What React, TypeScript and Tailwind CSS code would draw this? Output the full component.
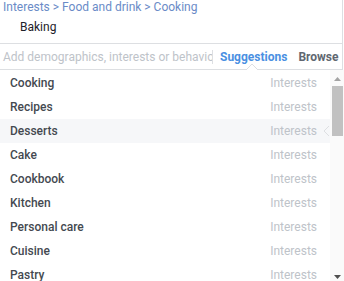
import React from "react";

const items = [
  "Cooking",
  "Recipes",
  "Desserts",
  "Cake",
  "Cookbook",
  "Kitchen",
  "Personal care",
  "Cuisine",
  "Pastry",
];

export default function App() {
  return (
    <div
      className="w-[344px] h-[281px] overflow-hidden bg-white"
      style={{ fontFamily: "Roboto, 'Liberation Sans', sans-serif" }}
    >
      <div className="border-r border-[#dddfe2] w-[343px]">
        <div className="h-[43px] pl-[3px]">
          <div className="h-[15px] text-[12px] leading-[15px] text-[#6a8bc7]">
            Interests &gt; Food and drink &gt; Cooking
          </div>
          <div className="pl-[17px] pt-[4px] text-[12px] leading-[16px] text-[#1d2129]">
            Baking
          </div>
        </div>
        <div className="relative h-[27px] border-t border-b border-[#dddfe2] flex items-center">
          <div className="pl-[3px] w-[212px] text-[12px] text-[#bec3c9] whitespace-nowrap overflow-hidden">
            Add demographics, interests or behavio
          </div>
          <div className="w-px h-[14px] bg-[#dddfe2]" />
          <div className="pl-[7px] text-[12px] font-bold text-[#4a90e2]">Suggestions</div>
          <div className="pl-[11px] text-[12px] font-bold text-[#606770]">Browse</div>
          <svg
            className="absolute left-[246px] bottom-[-1px]"
            width="12"
            height="6"
            viewBox="0 0 12 6"
          >
            <path d="M0 6 L6 0 L12 6" fill="white" stroke="#dddfe2" strokeWidth="1" />
          </svg>
        </div>
      </div>
      <div className="flex">
        <div className="flex-1 pt-[1px]">
          {items.map((it, i) => (
            <div
              key={it}
              className={
                "relative h-[24px] flex items-center justify-between pl-[10px] pr-[13px] " +
                (i === 2 ? "bg-[#f6f7f9]" : "")
              }
            >
              <span className="text-[12px] font-medium text-[#444950]">{it}</span>
              <span className="text-[12px] text-[#bec3c9]">Interests</span>
              {i === 2 && (
                <svg
                  className="absolute right-[0px] top-[7px]"
                  width="6"
                  height="10"
                  viewBox="0 0 6 10"
                >
                  <path d="M5 0 L0 5 L5 10" fill="none" stroke="#dddfe2" strokeWidth="1" />
                </svg>
              )}
            </div>
          ))}
        </div>
        <div className="w-[14px] bg-[#fafafa] flex flex-col items-center">
          <svg className="mt-[7px]" width="7" height="4" viewBox="0 0 7 4">
            <path d="M0 4 L3.5 0 L7 4 Z" fill="#a3a3a3" />
          </svg>
          <div className="mt-[5px] w-[11px] h-[50px] bg-[#c1c1c1]" />
          <div className="flex-1" />
          <svg className="mb-[8px]" width="7" height="4" viewBox="0 0 7 4">
            <path d="M0 0 L7 0 L3.5 4 Z" fill="#505050" />
          </svg>
        </div>
      </div>
    </div>
  );
}
